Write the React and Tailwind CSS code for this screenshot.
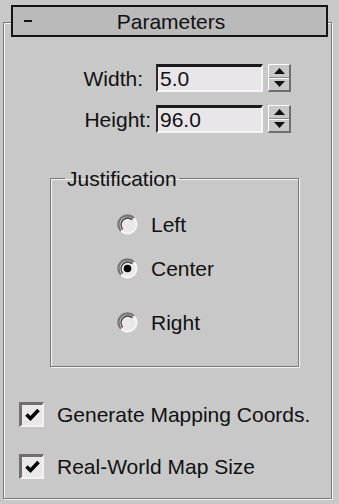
import { useState } from 'react'

const FONT = { fontFamily: '"Liberation Sans", Arial, sans-serif' }

function Spinner() {
  return (
    <div className="ml-[5px] flex h-[28px] w-[23px] flex-col border-t border-l border-t-white border-l-white border-r-2 border-b-2 border-r-[#6e6e6e] border-b-[#6e6e6e] bg-[#c8c8c8]">
      <div className="flex flex-1 items-center justify-center border-b border-b-[#8a8a8a]">
        <svg width="11" height="6" viewBox="0 0 11 6">
          <path d="M5.5 0 L11 6 L0 6 Z" fill="#111" />
        </svg>
      </div>
      <div className="flex flex-1 items-center justify-center border-t border-t-white">
        <svg width="11" height="6" viewBox="0 0 11 6">
          <path d="M0 0 L11 0 L5.5 6 Z" fill="#111" />
        </svg>
      </div>
    </div>
  )
}

function NumberRow({ label, value, labelPad, className }) {
  return (
    <div className={`flex h-[28px] items-center ${className ?? ''}`}>
      <div className="w-[152px] text-right text-[21px] leading-none text-[#111]" style={{ paddingRight: labelPad }}>
        {label}
      </div>
      <div className="flex h-[28px] w-[107px] items-center border-t-[3px] border-l-2 border-t-[#1a1a1a] border-l-[#2a2a2a] border-r-2 border-b-2 border-r-[#f4f4f4] border-b-[#f4f4f4] bg-[#e9e5ea] pl-[2px] text-[21px] leading-none text-[#111]">
        {value}
      </div>
      <Spinner />
    </div>
  )
}

function Radio({ checked, label, onClick, className }) {
  return (
    <div className={`flex h-[24px] cursor-default items-center ${className ?? ''}`} onClick={onClick}>
      <svg width="21" height="21" viewBox="0 0 21 21">
        <circle cx="10.5" cy="10.5" r="9" fill="#ebe7eb" />
        <path d="M4.1 16.9 A9 9 0 0 1 16.9 4.1" fill="none" stroke="#767676" strokeWidth="2.4" />
        <path d="M16.9 4.1 A9 9 0 0 1 4.1 16.9" fill="none" stroke="#f6f6f6" strokeWidth="2" />
        <path d="M5.7 15.3 A6.8 6.8 0 0 1 15.3 5.7" fill="none" stroke="#3c3c3c" strokeWidth="1.3" />
        {checked && <circle cx="10.5" cy="10.5" r="3.8" fill="#000" />}
      </svg>
      <span className="ml-[13px] text-[21px] leading-none text-[#111]">{label}</span>
    </div>
  )
}

function Check({ label, className }) {
  return (
    <div className={`flex h-[24px] items-center ${className ?? ''}`}>
      <div className="flex h-[25px] w-[25px] items-center justify-center border-t-[3px] border-l-[3px] border-t-[#6f6f6f] border-l-[#6f6f6f] border-r-2 border-b-2 border-r-[#f2f2f2] border-b-[#f2f2f2] bg-[#ebe7eb]">
        <svg width="15" height="14" viewBox="0 0 15 14">
          <path d="M1.5 6.5 L5.5 10.5 L13.5 2" fill="none" stroke="#000" strokeWidth="3.6" />
        </svg>
      </div>
      <span className="ml-[13px] text-[21px] leading-none text-[#111]">{label}</span>
    </div>
  )
}

export default function App() {
  const [just, setJust] = useState('center')

  return (
    <div className="h-[504px] w-[339px] overflow-hidden bg-[#c8c8c8] pt-[5px]" style={FONT}>
      {/* Rollout header */}
      <div className="relative z-10 mx-[11px] flex h-[32px] items-center border-2 border-[#141414] bg-[#bababa]">
        <div className="ml-[11px] h-[2px] w-[8px] bg-[#141414]" />
        <div className="flex-1 pr-[16px] text-center text-[21px] leading-none text-[#111]">Parameters</div>
      </div>

      {/* Rollout body */}
      <div className="-mt-[15px] ml-[3px] h-[477px] w-[329px] border border-[#7a7a7a] pt-[41px] shadow-[inset_1px_1px_0_#f4f4f4,1px_1px_0_#f4f4f4]">
        <NumberRow label="Width:" value="5.0" labelPad="13px" />
        <NumberRow label="Height:" value="96.0" labelPad="5px" className="mt-[13px]" />

        <fieldset className="mt-[34px] ml-[46px] w-[249px] border border-[#7a7a7a] px-0 pb-[32px] shadow-[inset_1px_1px_0_#f4f4f4,1px_1px_0_#f4f4f4]">
          <legend className="ml-[14px] px-[2px] text-[21px] leading-[23px] text-[#111]">Justification</legend>
          <div className="pl-[66px]">
            <Radio label="Left" checked={just === 'left'} onClick={() => setJust('left')} className="mt-[22px]" />
            <Radio label="Center" checked={just === 'center'} onClick={() => setJust('center')} className="mt-[20px]" />
            <Radio label="Right" checked={just === 'right'} onClick={() => setJust('right')} className="mt-[30px]" />
          </div>
        </fieldset>

        <div className="pl-[15px]">
          <Check label="Generate Mapping Coords." className="mt-[35px]" />
          <Check label="Real-World Map Size" className="mt-[28px]" />
        </div>
      </div>
    </div>
  )
}
